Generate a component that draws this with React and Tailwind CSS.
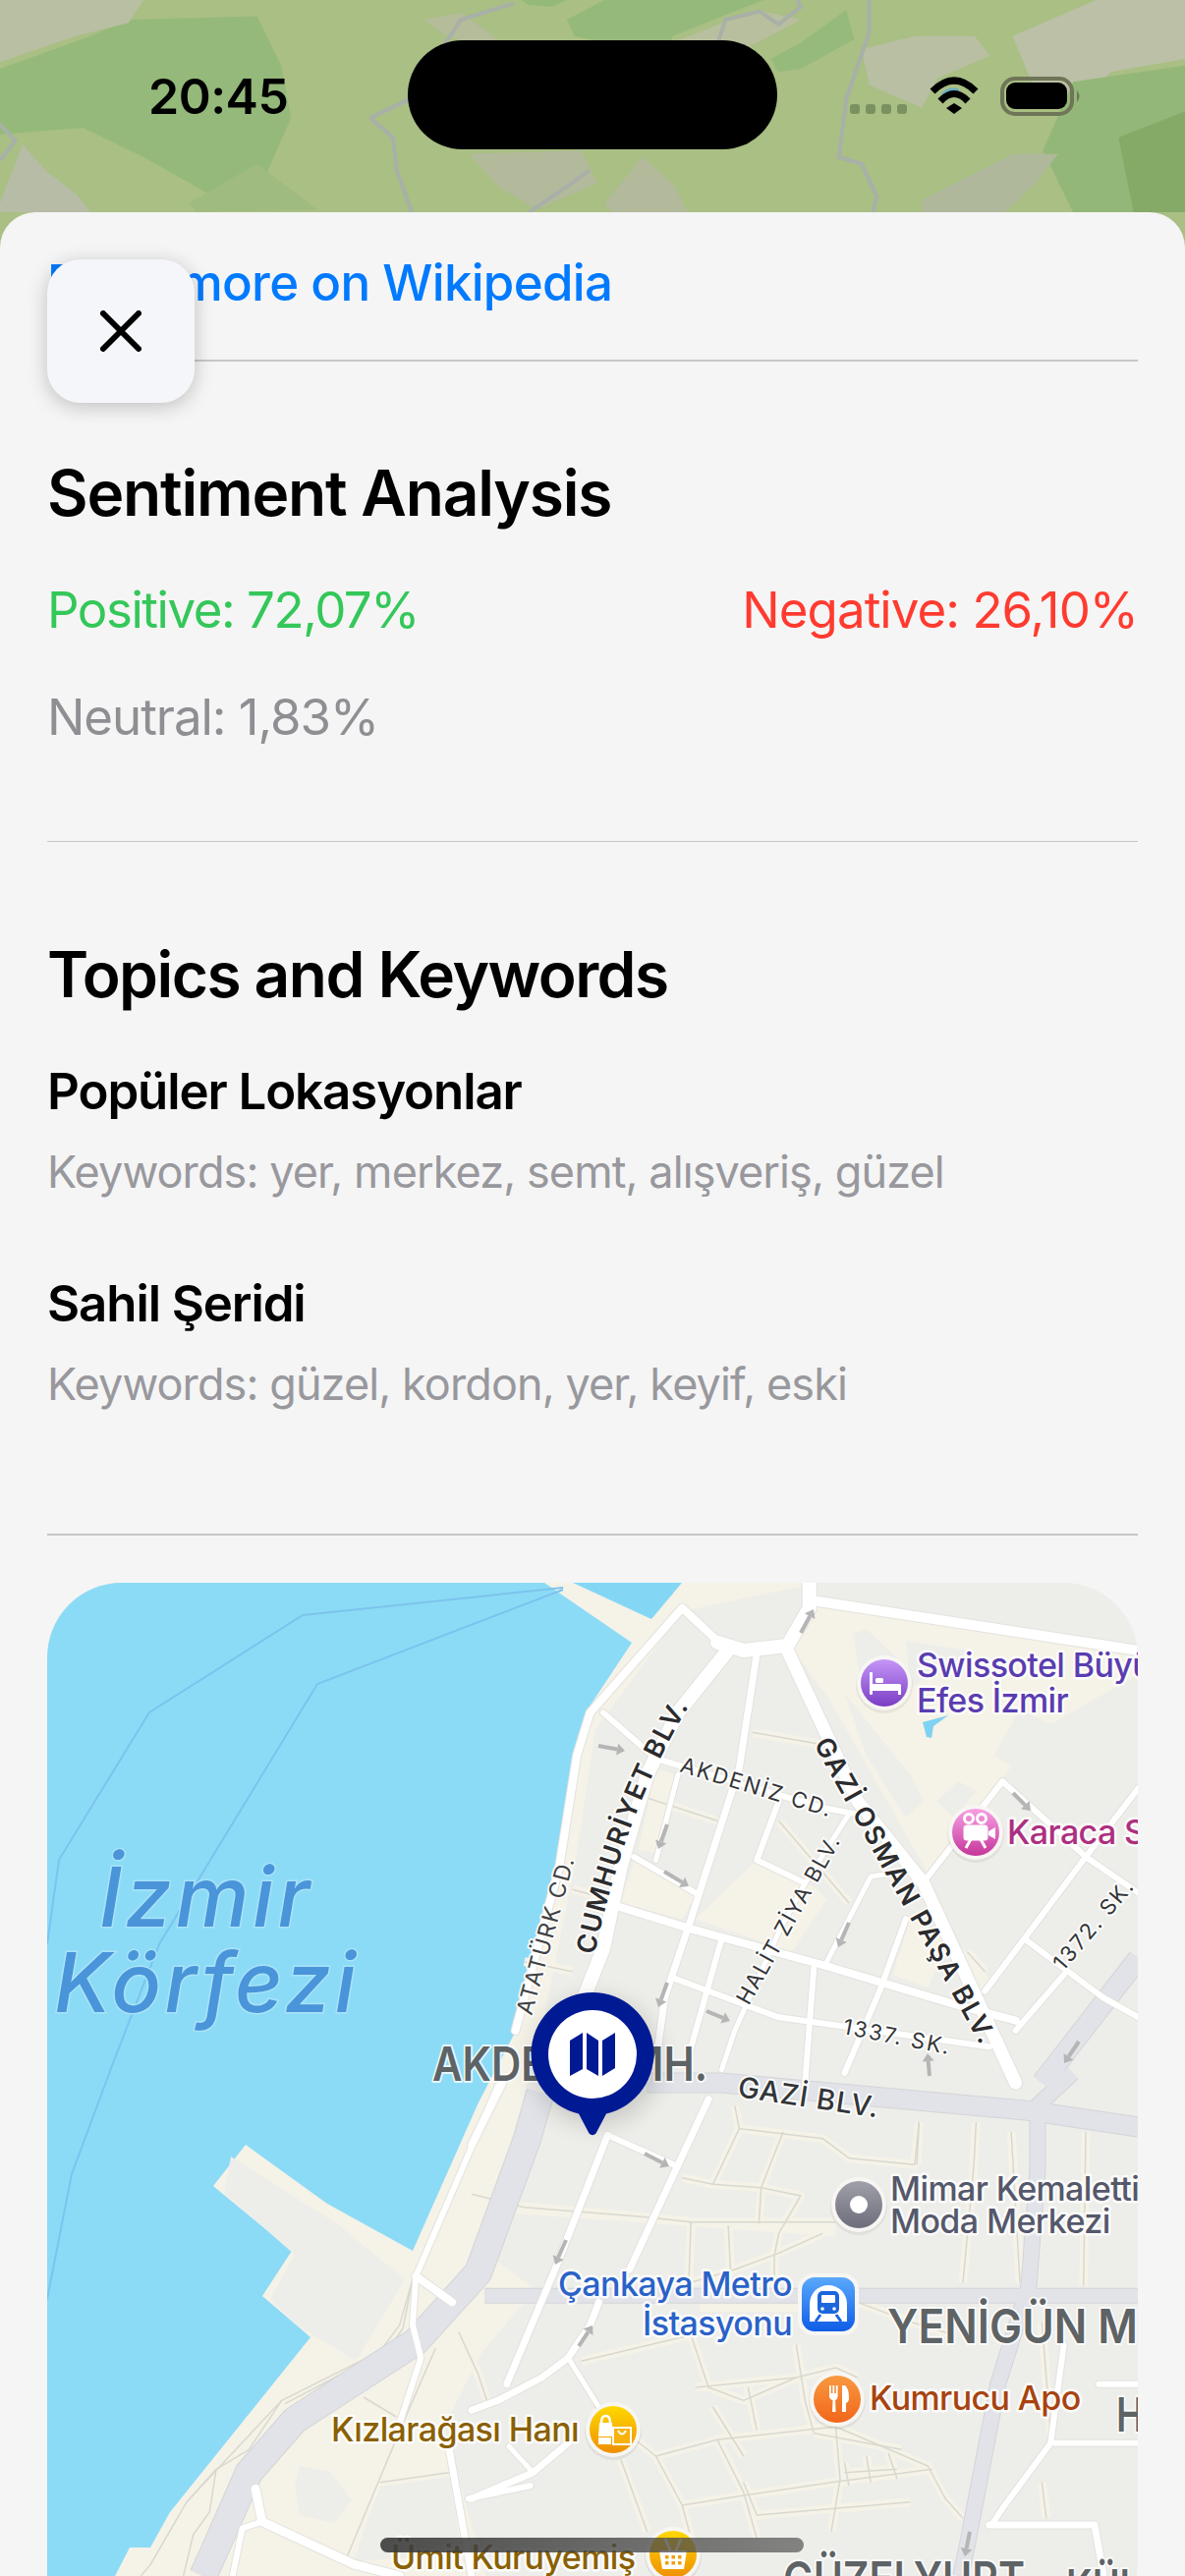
import React from "react";

// reference crops were read at different scales, so street data stays in crop units
const fromTop = (pts) => pts.map(([x, y]) => [480 + x / 2.24, 1600 + y / 3]);
const fromBottom = (pts) => pts.map(([x, y]) => [480 + x / 2.24, 2110 + y / 3]);
const fromLeft = (pts) => pts.map(([x, y]) => [40 + x / 3, 2100 + y / 3]);
const toPoints = (pts) => pts.map((p) => p.join(",")).join(" ");

const parks = [
  fromTop([[790, 100], [1520, 260], [1510, 320], [1300, 480], [1210, 630], [1040, 920], [820, 400], [730, 230]]),
  fromTop([[510, 1060], [650, 880], [780, 960], [810, 1000], [730, 1160]]),
  fromTop([[370, 880], [510, 990], [480, 1060], [340, 1010]]),
  fromTop([[960, 1230], [1000, 1060], [1090, 1120], [1040, 1270]]),
  fromTop([[1120, 1150], [1180, 1240], [1160, 1280], [1110, 1190]]),
  fromTop([[420, 600], [470, 620], [430, 860], [380, 850]]),
  fromBottom([[0, 380], [500, 440], [830, 470], [830, 500], [0, 420]]),
  fromBottom([[520, 690], [760, 700], [740, 730], [520, 730]]),
];

const parkBlocks = [
  fromTop([[870, 190], [900, 175], [1000, 300], [890, 360]]),
  fromTop([[990, 210], [1130, 240], [1110, 270], [1000, 350]]),
  fromTop([[850, 370], [1000, 620], [1030, 700], [990, 750], [900, 560]]),
  fromTop([[1110, 640], [1150, 670], [1100, 750], [1060, 700]]),
  fromTop([[1250, 420], [1330, 470], [1240, 600], [1190, 560]]),
];

const minorStreets = [
  fromBottom([[0, 370], [120, 410], [400, 440], [500, 455], [830, 455]]),
  fromBottom([[610, 170], [800, 200], [860, 260], [1010, 280], [1020, 150]]),
  fromBottom([[600, 100], [610, 170], [550, 340], [660, 350], [750, 375], [700, 490], [690, 560], [690, 650]]),
  fromBottom([[710, 180], [660, 350], [655, 460]]),
  fromBottom([[480, 320], [550, 340]]),
  fromBottom([[500, 455], [495, 640]]),
  fromBottom([[585, 465], [590, 600]]),
  fromBottom([[800, 490], [700, 550], [600, 600], [500, 640]]),
  fromBottom([[1150, 150], [1145, 280], [1120, 640]]),
  fromBottom([[1020, 150], [1015, 280]]),
  fromBottom([[1400, 180], [1395, 650]]),
  fromBottom([[250, 880], [500, 800], [540, 960], [620, 1000], [740, 930], [830, 900], [880, 930]]),
  fromBottom([[510, 960], [740, 930]]),
  fromBottom([[740, 830], [760, 1000], [780, 1100]]),
  fromBottom([[420, 1170], [480, 1320], [620, 1290], [820, 1250], [1050, 1210]]),
  fromBottom([[420, 1170], [560, 1120], [830, 1080], [1040, 1200], [1080, 1300], [1120, 1360]]),
  fromBottom([[280, 1020], [420, 1170]]),
  fromBottom([[340, 1180], [400, 1400]]),
  fromBottom([[480, 1320], [500, 1420]]),
  fromBottom([[560, 1120], [620, 1280], [650, 1420]]),
  fromBottom([[830, 1080], [840, 1240], [820, 1400]]),
  fromBottom([[550, 1020], [620, 1170]]),
  fromBottom([[630, 960], [650, 1090]]),
  fromBottom([[780, 1100], [980, 1150]]),
  fromBottom([[850, 1190], [860, 1260]]),
  fromBottom([[900, 1170], [910, 1250]]),
  fromBottom([[950, 1160], [970, 1240]]),
  fromBottom([[850, 1220], [970, 1210]]),
  fromBottom([[620, 1250], [650, 1350], [1000, 1310]]),
  fromBottom([[1230, 180], [1250, 640]]),
  fromBottom([[1300, 1250], [1310, 1360]]),
  fromBottom([[880, 700], [1000, 760], [1100, 800]]),
  fromBottom([[1300, 760], [1320, 1100]]),
  fromLeft([[1140, 660], [1100, 800], [1040, 880], [740, 1030], [590, 1190], [450, 1340], [340, 1530], [310, 1566]]),
  fromLeft([[1140, 660], [1110, 810], [1060, 880], [960, 930], [750, 1040]]),
  fromLeft([[740, 1030], [640, 1180], [540, 1240], [450, 1340]]),
  fromLeft([[540, 1240], [520, 1370], [470, 1440], [440, 1566]]),
  fromLeft([[1280, 820], [1340, 950], [1370, 1040]]),
  fromLeft([[1210, 870], [1110, 1100], [930, 1530]]),
  fromLeft([[990, 1020], [1090, 1080]]),
  fromLeft([[1040, 1280], [1250, 1250]]),
  fromTop([[640, 490], [790, 525]]),
  fromTop([[400, 690], [560, 760]]),
  fromTop([[700, 760], [860, 1010]]),
  fromTop([[340, 1010], [230, 970]]),
  fromTop([[230, 1220], [120, 1190]]),
  fromTop([[1130, 1160], [1170, 1220]]),
];

const majorRoads = [
  { pts: fromLeft([[1530, 90], [1490, 230], [1340, 640], [1150, 850], [780, 1090], [640, 1250], [530, 1500], [500, 1566]]), w: 27 },
  { pts: fromBottom([[30, 680], [1520, 680]]), w: 14 },
  { pts: fromBottom([[400, 30], [570, 30], [1270, 115], [1520, 165]]), w: 19 },
  { pts: fromBottom([[1370, 0], [1290, 100], [1290, 300], [1270, 650], [1200, 950], [1130, 1440], [1115, 1536]]), w: 15 },
  { pts: fromTop([[1520, 1180], [1300, 1560]]), w: 20 },
];

const whiteRoads = [
  { pts: fromTop([[590, 230], [470, 430], [400, 620], [340, 900], [300, 1150], [250, 1320]]), w: 14 },
  { pts: fromTop([[560, 215], [620, 240], [720, 225], [770, 110], [770, 33]]), w: 14 },
  { pts: fromTop([[560, 210], [480, 110], [270, 430], [240, 560], [200, 900], [100, 1400]]), w: 8 },
  { pts: fromTop([[790, 90], [1520, 240]]), w: 10 },
  { pts: fromTop([[720, 240], [880, 700], [1030, 950], [1240, 1560]]), w: 13 },
  { pts: fromTop([[650, 250], [610, 600], [500, 1060], [440, 1300], [420, 1500]]), w: 7 },
  { pts: fromTop([[420, 570], [800, 720], [880, 740]]), w: 6 },
  { pts: fromTop([[330, 1020], [500, 1090], [800, 1200], [1100, 1320], [1240, 1370]]), w: 8 },
  { pts: fromTop([[860, 740], [760, 950], [700, 1100], [600, 1400], [570, 1520]]), w: 5 },
  { pts: fromTop([[700, 700], [650, 880], [760, 950]]), w: 6 },
  { pts: fromTop([[300, 430], [420, 570]]), w: 6 },
  { pts: fromTop([[370, 870], [510, 980]]), w: 6 },
  { pts: fromTop([[470, 620], [420, 880]]), w: 5 },
  { pts: fromTop([[1210, 640], [1040, 930]]), w: 6 },
  { pts: fromTop([[1210, 640], [1310, 760], [1400, 870], [1520, 980]]), w: 6 },
  { pts: fromTop([[1520, 660], [1400, 870], [1170, 1280]]), w: 6 },
  { pts: fromTop([[1260, 1120], [1440, 1300], [1520, 1360]]), w: 6 },
  { pts: fromTop([[1350, 1230], [1240, 1400]]), w: 6 },
  { pts: fromTop([[960, 920], [910, 930], [810, 1190]]), w: 5 },
  { pts: fromTop([[990, 1060], [930, 1280], [850, 1530]]), w: 6 },
  { pts: fromTop([[780, 1210], [760, 1560]]), w: 6 },
  { pts: fromTop([[570, 1120], [490, 1500]]), w: 6 },
  { pts: fromTop([[460, 1240], [700, 1360], [1180, 1450]]), w: 6 },
  { pts: fromBottom([[310, 190], [460, 280]]), w: 6 },
  { pts: fromBottom([[540, 80], [360, 600]]), w: 7 },
  { pts: fromBottom([[310, 190], [190, 600], [80, 950]]), w: 7 },
  { pts: fromBottom([[70, 30], [0, 220]]), w: 8 },
  { pts: fromBottom([[0, 1030], [60, 1000], [160, 930], [220, 870], [270, 770], [290, 700]]), w: 7 },
  { pts: fromBottom([[220, 870], [290, 1020]]), w: 5 },
  { pts: fromBottom([[0, 1300], [140, 1220], [220, 1130]]), w: 7 },
  { pts: fromBottom([[85, 1140], [140, 1220]]), w: 5 },
  { pts: fromBottom([[1180, 1380], [1420, 1380], [1440, 1530]]), w: 7 },
  { pts: fromBottom([[1330, 1130], [1520, 1130]]), w: 6 },
  { pts: fromBottom([[1350, 830], [1320, 1130], [1210, 1330], [1190, 1370]]), w: 6 },
  { pts: fromBottom([[1430, 950], [1520, 950]]), w: 6 },
  { pts: fromLeft([[1400, 70], [1150, 650], [1140, 800], [1165, 900], [1100, 1100]]), w: 6 },
  { pts: fromLeft([[1150, 650], [1260, 730]]), w: 8 },
  { pts: fromLeft([[660, 1300], [680, 1400], [960, 1530], [1100, 1566]]), w: 9 },
  { pts: fromLeft([[680, 1400], [620, 1420], [590, 1566]]), w: 6 },
  { pts: fromLeft([[1250, 1170], [1320, 1566]]), w: 7 },
  { pts: fromLeft([[1310, 1330], [1500, 1290]]), w: 6 },
];

const oneWayArrows = [
  [609, 1777, 636, 1782],
  [679, 1857, 670, 1882],
  [676, 1905, 701, 1920],
  [815, 1662, 828, 1638],
  [1031, 1825, 1049, 1843],
  [864, 1957, 853, 1982],
  [679, 2018, 670, 2043],
  [719, 2047, 743, 2057],
  [1098, 2078, 1083, 2100],
  [946, 2113, 944, 2090],
  [656, 2192, 681, 2205],
  [576, 2280, 565, 2305],
  [589, 2388, 603, 2367],
  [987, 2577, 982, 2602],
];

const streetLabels = [
  { id: "cumhuriyet", d: "M605 1990 Q634 1850 700 1738", text: "CUMHURİYET BLV.", size: 27, weight: 600, spacing: 1.8, fill: "#2b2b2d" },
  { id: "ataturk", d: "M541 2052 L586 1888", text: "ATATÜRK CD.", size: 23, weight: 400, spacing: 1.6, fill: "#3f4143" },
  { id: "akdeniz", d: "M691 1803 L852 1852", text: "AKDENİZ CD.", size: 22, weight: 400, spacing: 2, fill: "#333537" },
  { id: "gaziosman", d: "M828 1775 L998 2082", text: "GAZİ OSMAN PAŞA BLV.", size: 27, weight: 600, spacing: 1.8, fill: "#2b2b2d" },
  { id: "halit", d: "M762 2042 L860 1866", text: "HALİT ZİYA BLV.", size: 22, weight: 400, spacing: 1.6, fill: "#333537" },
  { id: "sk1337", d: "M857 2070 L970 2092", text: "1337. SK.", size: 22, weight: 400, spacing: 2, fill: "#333537" },
  { id: "sk1372", d: "M1082 2007 L1154 1922", text: "1372. SK.", size: 22, weight: 400, spacing: 2, fill: "#333537" },
  { id: "gazi", d: "M750 2134 L896 2156", text: "GAZİ BLV.", size: 29, weight: 500, spacing: 1, fill: "#333537" },
];

const areaLabels = [
  { x: 440, y: 2118, text: "AKDENİZ MH.", length: 280 },
  { x: 903, y: 2385, text: "YENİGÜN MH", length: 288 },
  { x: 797, y: 2642, text: "GÜZELYURT", length: 246 },
  { x: 1085, y: 2650, text: "KÜLTÜR", length: 150 },
  { x: 1136, y: 2475, text: "H", length: 28 },
];

const placeLabels = [
  { x: 933, y: 1707, text: "Swissotel Büyük", fill: "#5a3db0" },
  { x: 933, y: 1743, text: "Efes İzmir", fill: "#5a3db0" },
  { x: 1025, y: 1877, text: "Karaca Sineması", fill: "#ad2f80" },
  { x: 906, y: 2240, text: "Mimar Kemalettin", fill: "#55586b" },
  { x: 906, y: 2273, text: "Moda Merkezi", fill: "#55586b" },
  { x: 806, y: 2337, text: "Çankaya Metro", fill: "#2a62c8", anchor: "end" },
  { x: 806, y: 2377, text: "İstasyonu", fill: "#2a62c8", anchor: "end" },
  { x: 885, y: 2453, text: "Kumrucu Apo", fill: "#a8430f" },
  { x: 589, y: 2485, text: "Kızlarağası Hanı", fill: "#8a6000", anchor: "end" },
  { x: 398, y: 2615, text: "Ümit Kuruyemiş", fill: "#8a6000" },
];

const poiDots = [
  { cx: 900, cy: 1713, id: "poiPurple" },
  { cx: 993, cy: 1865, id: "poiPink" },
  { cx: 874, cy: 2244, id: "poiGray" },
  { cx: 852, cy: 2442, id: "poiOrange" },
  { cx: 624, cy: 2473, id: "poiYellow" },
  { cx: 685, cy: 2600, id: "poiYellow" },
];

const gradients = [
  ["poiPurple", "#c596f7", "#7a3dc4"],
  ["poiPink", "#f8a0e4", "#c5369a"],
  ["poiGray", "#a0a0aa", "#6d6d7b"],
  ["poiOrange", "#f89a40", "#f2651a"],
  ["poiYellow", "#ffd800", "#ee8f00"],
  ["poiBlue", "#5aa9fb", "#0f5de6"],
];

const terrain = [
  { fill: "#95b97a", pts: "0,210 120,110 170,60 340,50 372,200 385,360 345,570 290,610 190,480 110,390 0,410" },
  { fill: "#b9bfa3", pts: "0,0 190,0 170,70 100,110 0,190" },
  { fill: "#95b97a", pts: "750,60 800,0 1010,0 890,110 880,170 800,130 760,110" },
  { fill: "#95b97a", pts: "690,0 750,0 730,20 700,15" },
  { fill: "#b4bc99", pts: "560,60 610,40 660,120 620,130 590,110" },
  { fill: "#b8bf9e", pts: "890,130 1000,30 1060,60 960,180 880,280" },
  { fill: "#b3ba9b", pts: "620,470 770,460 790,560 710,640 660,570" },
  { fill: "#b3ba9b", pts: "800,620 850,480 890,560 910,648 810,648" },
  { fill: "#96ba7b", pts: "1020,180 1060,130 1120,30 1130,120 1060,210 1030,220" },
  { fill: "#b8bfa2", pts: "1140,150 1210,110 1290,110 1310,170 1240,240 1220,330 1150,260" },
  { fill: "#bbc0a6", pts: "1340,110 1450,0 1568,0 1568,180 1470,220 1430,320 1370,280" },
  { fill: "#93b778", pts: "1420,250 1568,200 1568,648 1420,648 1380,460" },
  { fill: "#85aa68", pts: "1480,420 1568,340 1568,648 1500,648" },
  { fill: "#afb89a", pts: "1220,610 1340,470 1400,470 1370,560 1330,648 1220,648" },
  { fill: "#b7bca6", pts: "0,620 30,440 60,520 100,590 120,648 0,648" },
  { fill: "#9fbb80", pts: "250,620 340,500 420,640 260,648" },
];

const terrainRoads = [
  "490,360 540,305 560,240 590,130 610,60 680,10",
  "490,360 520,420 525,520 545,648",
  "780,520 750,570 700,648",
  "950,130 960,60 1005,35 1030,75 1060,20 1055,0",
  "1150,0 1150,100 1120,300 1110,480 1140,500 1160,600 1155,648",
  "0,380 20,430 0,490",
];

export default function App() {
  return (
    <div className="relative h-[2622px] w-[1206px] overflow-hidden bg-[#f5f5f5] [font-family:Inter,'Noto_Sans',sans-serif]">
      <StatusHeader />
      <div className="relative -mt-[44px] rounded-t-[36px] bg-[#f5f5f5] px-[48px] pt-[42px]">
        <a className="block text-[51px] font-medium leading-[60px] tracking-[-0.7px] text-[#007aff]">
          Read more on Wikipedia
        </a>
        <Rule className="mt-[48px]" />

        <h2 className="mt-[99px] text-[64px] font-semibold leading-[70px] tracking-[-1.2px] text-black">
          Sentiment Analysis
        </h2>
        <div className="mt-[54px] flex justify-between text-[51px] leading-[60px]">
          <span className="tracking-[-1.45px] text-[#34c759]">Positive: 72,07%</span>
          <span className="tracking-[-0.95px] text-[#ff3b30]">Negative: 26,10%</span>
        </div>
        <p className="mt-[49px] text-[51px] leading-[60px] tracking-[-1.05px] text-[#8e8e93]">
          Neutral: 1,83%
        </p>
        <Rule className="mt-[96px]" />

        <h2 className="mt-[100px] text-[64px] font-semibold leading-[70px] tracking-[-1.55px] text-black">
          Topics and Keywords
        </h2>
        <Topic
          className="mt-[54px]"
          title="Popüler Lokasyonlar"
          keywords="Keywords: yer, merkez, semt, alışveriş, güzel"
        />
        <Topic
          className="mt-[77px]"
          title="Sahil Şeridi"
          keywords="Keywords: güzel, kordon, yer, keyif, eski"
        />
        <Rule className="mt-[125px]" />

        <div className="mt-[48px] h-[1011px] overflow-hidden rounded-t-[76px]">
          <CityMap />
        </div>
      </div>

      <button className="absolute left-[48px] top-[264px] flex h-[146px] w-[150px] items-center justify-center rounded-[34px] bg-[#f4f6f9] shadow-[0_4px_20px_rgba(0,0,0,0.22)]">
        <svg width="42" height="42" viewBox="0 0 42 42">
          <path d="M3 3 L39 39 M39 3 L3 39" stroke="#000" strokeWidth="6" strokeLinecap="round" />
        </svg>
      </button>

      <div className="absolute left-[387px] top-[2583px] h-[15px] w-[431px] rounded-full bg-gradient-to-r from-[#3a3a3a]/90 to-[#555]/70" />
    </div>
  );
}

function Rule({ className }) {
  return <div className={`h-[1.5px] bg-[#c6c6c8] ${className}`} />;
}

function Topic({ className, title, keywords }) {
  return (
    <div className={className}>
      <h3 className="text-[51px] font-semibold leading-[60px] tracking-[-1.1px] text-black">{title}</h3>
      <p className="mt-[25px] text-[45px] leading-[54px] tracking-[-0.9px] text-[#98989d]">{keywords}</p>
    </div>
  );
}

function StatusHeader() {
  return (
    <div className="relative h-[260px] overflow-hidden bg-[#a9bf84]">
      <svg className="absolute inset-0" width="1206" height="260" viewBox="0 0 1568 780" preserveAspectRatio="none">
        {terrain.map((t) => (
          <polygon key={t.pts} points={t.pts} fill={t.fill} />
        ))}
        {terrainRoads.map((pts) => (
          <polyline key={pts} points={pts} fill="none" stroke="#a8b0a8" strokeWidth="4" vectorEffect="non-scaling-stroke" />
        ))}
      </svg>

      <span className="absolute left-[151px] top-[68px] text-[50px] font-semibold leading-[60px] tracking-[-0.5px] text-black">
        20:45
      </span>
      <div className="absolute left-[415px] top-[41px] h-[111px] w-[376px] rounded-[56px] bg-black" />

      <div className="absolute left-[865px] top-[106px] flex gap-[6px]">
        {[0, 1, 2, 3].map((i) => (
          <div key={i} className="h-[10px] w-[10px] rounded-[3px] bg-[#50643c]/50" />
        ))}
      </div>

      <svg className="absolute left-[940px] top-[70px]" width="160" height="54" viewBox="940 70 160 54">
        <path d="M958 95 Q966 88 975 90 L977 96 Q970 95 963 100 Z" fill="#6aaec9" />
        <path d="M949 93 Q971 71 993 93" fill="none" stroke="#000" strokeWidth="7" />
        <path d="M957 103 Q971 88 985 103" fill="none" stroke="#000" strokeWidth="7" />
        <polygon points="963,110 971,105 979,110 971,116" fill="#000" />
        <rect x="1020" y="80" width="71" height="36" rx="13" fill="none" stroke="#6f7557" strokeWidth="4" />
        <rect x="1024" y="84" width="62" height="27" rx="9" fill="#000" />
        <path d="M1096 92 Q1101 98 1096 104 Z" fill="#6f7557" />
      </svg>
    </div>
  );
}

function CityMap() {
  return (
    <svg width="1110" height="1011" viewBox="48 1611 1110 1011" className="block">
      <defs>
        {gradients.map(([id, top, bottom]) => (
          <linearGradient key={id} id={id} x1="0" y1="0" x2="0" y2="1">
            <stop offset="0" stopColor={top} />
            <stop offset="1" stopColor={bottom} />
          </linearGradient>
        ))}
        <filter id="pinShadow" x="-50%" y="-50%" width="200%" height="200%">
          <feGaussianBlur stdDeviation="12" />
        </filter>
        {streetLabels.map((l) => (
          <path key={l.id} id={l.id} d={l.d} />
        ))}
      </defs>

      {/* land and water */}
      <rect x="48" y="1611" width="1110" height="1011" fill="#f5f2e7" />
      <polygon
        fill="#8cdbf6"
        points="48,1611 554,1611 643,1672 596,1743 576,1867 525,2067 487,2140 420,2291 333,2243 250,2183 217,2225 297,2291 267,2337 316,2379 173,2557 153,2593 132,2593 117,2622 48,2622"
      />
      <polygon fill="#83d7f5" points="583,1611 694,1611 663,1648" />
      <polyline fill="none" stroke="#7cc3ee" strokeWidth="2" points="573,1616 308,1644 152,1743 60,1893 48,1979" />
      <polyline fill="none" stroke="#7cc3ee" strokeWidth="2" points="573,1618 323,1714 162,1979 115,2100 73,2213 48,2340" />

      {/* built-up blocks */}
      <polygon
        fill="#ededea"
        points="833,1611 1158,1611 1158,2622 495,2622 452,2470 490,2395 545,2330 490,2290 520,2180 548,2080 585,1900 606,1760 695,1640"
      />
      <polygon fill="#ededea" points="235,2195 345,2265 412,2320 362,2403 300,2365 275,2340 300,2295 228,2232" />
      <polygon fill="#ededea" points="387,2527 457,2520 470,2600 360,2607" />
      <polygon fill="#ededea" points="305,2510 335,2515 358,2545 340,2568 305,2560 300,2530" />
      {parks.map((pts, i) => (
        <polygon key={i} points={toPoints(pts)} fill="#f5f2e7" />
      ))}
      {parkBlocks.map((pts, i) => (
        <polygon key={i} points={toPoints(pts)} fill="#ededea" />
      ))}
      <polygon fill="#7fd2f2" points="939,1753 965,1746 950,1757 948,1769 943,1768" />

      {/* streets: beige gap, grey line, then the white and grey roads on top */}
      {minorStreets.map((pts, i) => (
        <polyline key={i} points={toPoints(pts)} fill="none" stroke="#f5f2e7" strokeWidth="9" strokeLinejoin="round" />
      ))}
      {minorStreets.map((pts, i) => (
        <polyline key={i} points={toPoints(pts)} fill="none" stroke="#d9d8d0" strokeWidth="1.5" strokeLinejoin="round" />
      ))}
      {majorRoads.map((r, i) => (
        <polyline key={i} points={toPoints(r.pts)} fill="none" stroke="#d3d4d6" strokeWidth={r.w + 2} strokeLinejoin="round" />
      ))}
      {majorRoads.map((r, i) => (
        <polyline key={i} points={toPoints(r.pts)} fill="none" stroke="#e1e3e8" strokeWidth={r.w} strokeLinejoin="round" />
      ))}
      {whiteRoads.map((r, i) => (
        <polyline key={i} points={toPoints(r.pts)} fill="none" stroke="#e3e2de" strokeWidth={r.w + 2} strokeLinejoin="round" strokeLinecap="round" />
      ))}
      {whiteRoads.map((r, i) => (
        <polyline key={i} points={toPoints(r.pts)} fill="none" stroke="#ffffff" strokeWidth={r.w} strokeLinejoin="round" strokeLinecap="round" />
      ))}
      {oneWayArrows.map(([x1, y1, x2, y2]) => (
        <OneWayArrow key={`${x1}-${y1}`} x1={x1} y1={y1} x2={x2} y2={y2} />
      ))}

      {/* labels */}
      <g fontStyle="italic" fill="#4a94d9" stroke="#a9e3f8" strokeWidth="3" paintOrder="stroke" fontSize="84" fontWeight="500">
        <text x="101" y="1961" textLength="214" lengthAdjust="spacing">İzmir</text>
        <text x="55" y="2048" textLength="307" lengthAdjust="spacing">Körfezi</text>
      </g>
      {streetLabels.map((l) => (
        <text
          key={l.id}
          fontSize={l.size}
          fontWeight={l.weight}
          letterSpacing={l.spacing}
          fill={l.fill}
          stroke="#ffffff"
          strokeOpacity="0.85"
          strokeWidth="4"
          strokeLinejoin="round"
          paintOrder="stroke"
        >
          <textPath href={`#${l.id}`}>{l.text}</textPath>
        </text>
      ))}
      {areaLabels.map((l) => (
        <text
          key={l.text}
          x={l.x}
          y={l.y}
          fontSize="48"
          fontWeight="600"
          textLength={l.length}
          lengthAdjust="spacingAndGlyphs"
          fill="#5e6365"
          stroke="#ffffff"
          strokeOpacity="0.8"
          strokeWidth="4"
          strokeLinejoin="round"
          paintOrder="stroke"
        >
          {l.text}
        </text>
      ))}

      {placeLabels.map((l) => (
        <text
          key={l.text}
          x={l.x}
          y={l.y}
          textAnchor={l.anchor || "start"}
          fontSize="34"
          fontWeight="500"
          letterSpacing="-0.6"
          fill={l.fill}
          stroke="#ffffff"
          strokeOpacity="0.8"
          strokeWidth="5"
          strokeLinejoin="round"
          paintOrder="stroke"
        >
          {l.text}
        </text>
      ))}

      {/* points of interest */}
      {poiDots.map((p) => (
        <g key={p.cx}>
          <circle cx={p.cx} cy={p.cy + 2} r="29" fill="#000" opacity="0.06" />
          <circle cx={p.cx} cy={p.cy} r="28" fill="#f7f6f3" />
          <circle cx={p.cx} cy={p.cy} r="24" fill={`url(#${p.id})`} />
        </g>
      ))}
      <BedIcon />
      <CameraIcon />
      <circle cx="874" cy="2244" r="9" fill="#fff" />
      <ForkKnifeIcon />
      <BagsIcon />
      <BasketIcon />
      <TrainTile />
      <MapPin />
    </svg>
  );
}

function OneWayArrow({ x1, y1, x2, y2 }) {
  const len = Math.hypot(x2 - x1, y2 - y1);
  const ux = (x2 - x1) / len;
  const uy = (y2 - y1) / len;
  const bx = x2 - ux * 8;
  const by = y2 - uy * 8;
  const head = `${x2},${y2} ${bx - uy * 6},${by + ux * 6} ${bx + uy * 6},${by - ux * 6}`;
  return (
    <g>
      <line x1={x1} y1={y1} x2={bx} y2={by} stroke="#b5b5b5" strokeWidth="4" />
      <polygon points={head} fill="#b5b5b5" />
    </g>
  );
}

function BedIcon() {
  return (
    <g fill="#fff">
      <rect x="885" y="1702" width="3" height="23" rx="1" />
      <rect x="886" y="1714" width="31" height="7" rx="1.5" />
      <rect x="891" y="1708" width="8" height="5" rx="1.5" />
      <rect x="914" y="1720" width="3" height="5" />
    </g>
  );
}

function CameraIcon() {
  return (
    <g fill="none" stroke="#fff" strokeWidth="3">
      <circle cx="986" cy="1851" r="4.5" />
      <circle cx="999" cy="1851" r="4.5" />
      <rect x="982" y="1859" width="22" height="13" rx="2" fill="#fff" />
      <polygon points="1006,1864 1013,1860 1013,1872 1006,1868" fill="#fff" stroke="none" />
      <path d="M988 1872 L983 1881 M998 1872 L1003 1881" />
    </g>
  );
}

function ForkKnifeIcon() {
  return (
    <g fill="#fff">
      <path d="M844 2428 h1.8 v8 h1.6 v-8 h1.8 v8 h1.6 v-8 h1.8 v11 q0 3 -2.5 4 l0.5 12 h-3.6 l0.5 -12 q-3.5 -1 -3.5 -4 Z" />
      <path d="M860 2428 q4 3 4 13 q0 4 -3 5 v9 h-4 v-27 Z" />
    </g>
  );
}

function BagsIcon() {
  return (
    <g>
      <path d="M610 2466 h13 l1 14 h-15 Z" fill="#fff" />
      <path d="M612 2466 q0 -7 4.5 -7 q4.5 0 4.5 7" fill="none" stroke="#fff" strokeWidth="2.5" />
      <rect x="609" y="2481" width="13" height="7" fill="#fff" />
      <rect x="624" y="2471" width="18" height="17" fill="#f7b20f" stroke="#fff" strokeWidth="2" />
      <path d="M629 2474 q4 7 8 0" fill="none" stroke="#fff" strokeWidth="2" />
    </g>
  );
}

function BasketIcon() {
  return (
    <g>
      <path d="M671 2596 h28 l-3 19 h-22 Z" fill="#fff" />
      <path d="M677 2584 l5 12 M693 2584 l-5 12" stroke="#fff" strokeWidth="2.5" />
      <g fill="#f0a10a">
        <rect x="677" y="2601" width="3.5" height="3.5" />
        <rect x="683.5" y="2601" width="3.5" height="3.5" />
        <rect x="690" y="2601" width="3.5" height="3.5" />
        <rect x="677" y="2607" width="3.5" height="3.5" />
        <rect x="683.5" y="2607" width="3.5" height="3.5" />
        <rect x="690" y="2607" width="3.5" height="3.5" />
      </g>
    </g>
  );
}

function TrainTile() {
  return (
    <g>
      <rect x="812" y="2314" width="62" height="63" rx="16" fill="#f7f6f3" />
      <rect x="816" y="2318" width="54" height="55" rx="13" fill="url(#poiBlue)" />
      <path d="M824 2363 v-18 a19 19 0 0 1 38 0 v18 Z" fill="#fff" />
      <rect x="832" y="2332" width="22" height="23" rx="5" fill="#1c66dc" />
      <rect x="836" y="2336" width="14" height="8" rx="1" fill="#fff" />
      <circle cx="837" cy="2350" r="1.8" fill="#fff" />
      <circle cx="849" cy="2350" r="1.8" fill="#fff" />
      <path d="M835 2356 l-5 7 M851 2356 l5 7" stroke="#1c66dc" strokeWidth="3" />
    </g>
  );
}

function MapPin() {
  return (
    <g>
      <circle cx="606" cy="2098" r="64" fill="#000" opacity="0.16" filter="url(#pinShadow)" />
      <path d="M603 2028 a62.5 62.5 0 0 1 14 123.4 l-10.5 20 q-3.5 3.5 -7 0 l-10.5 -20 a62.5 62.5 0 0 1 14 -123.4 Z" fill="#001a94" />
      <circle cx="603" cy="2091" r="45" fill="#fff" />
      <g fill="#001a94">
        <polygon points="580,2077 593,2069 593,2106 580,2113" />
        <polygon points="597,2069 609,2077 609,2113 597,2106" />
        <polygon points="613,2077 626,2069 626,2105 613,2113" />
      </g>
    </g>
  );
}
